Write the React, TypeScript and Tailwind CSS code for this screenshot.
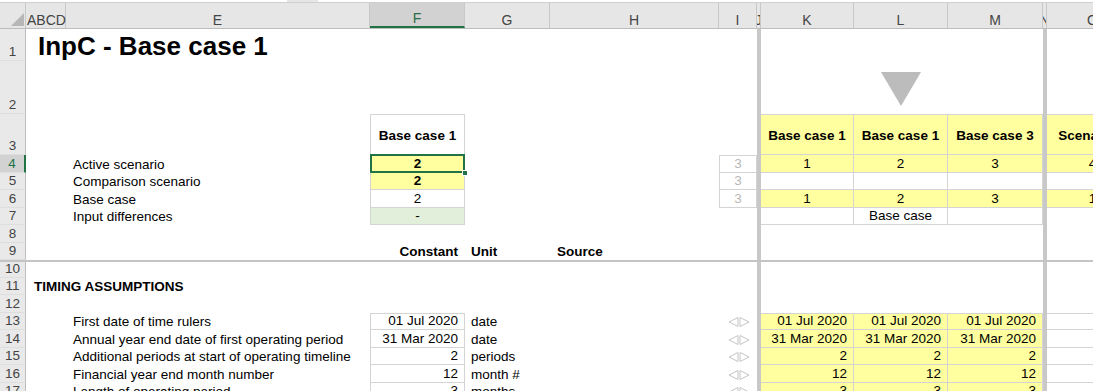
import React from "react";

type Spec = { t?: React.ReactNode; c?: string };

const W = [
  "w-[26px]",
  "w-[40px]",
  "w-[304px]",
  "w-[95px]",
  "w-[85px]",
  "w-[169px]",
  "w-[38px]",
  "w-[4px]",
  "w-[93px]",
  "w-[94px]",
  "w-[95px]",
  "w-[4px]",
  "w-[92px]",
];

const YB = "bg-[#ffff9f] border-r border-b border-[#d4d4d4]";
const YBT = "bg-[#ffff9f] border-t border-r border-b border-[#d4d4d4]";
const WB = "border-r border-b border-[#d4d4d4]";
const FB = "border-l border-r border-b border-[#d4d4d4]";
const FBT = "border border-[#d4d4d4]";

function Arrows() {
  return (
    <svg width="22" height="10" viewBox="0 0 22 10" className="mb-[3px]">
      <polygon points="10,0.5 10,9.5 1,5" fill="none" stroke="#c4c4c4" strokeWidth="1" />
      <polygon points="12,0.5 12,9.5 21,5" fill="none" stroke="#c4c4c4" strokeWidth="1" />
    </svg>
  );
}

function Row({
  n,
  h,
  cells = {},
  hl = false,
  line = false,
  al = "items-end leading-[16px]",
}: {
  n: number;
  h: string;
  cells?: Record<number, Spec>;
  hl?: boolean;
  line?: boolean;
  al?: string;
}) {
  return (
    <div className={`flex shrink-0 ${h} ${line ? "border-t-2 border-[#c4c4c4]" : ""}`}>
      <div
        className={`w-[26px] shrink-0 flex items-end justify-center leading-[16px] text-[13.5px] border-b border-b-[#dedede] ${
          hl
            ? "bg-[#d2d2d2] text-[#217346] border-r-2 border-r-[#217346]"
            : "bg-[#e9e9e9] text-[#444444] border-r border-r-[#bdbdbd]"
        }`}
      >
        {n}
      </div>
      {W.slice(1).map((w, i) => {
        const idx = i + 1;
        if (idx === 7 || idx === 11)
          return <div key={idx} className={`${w} shrink-0 bg-[#c8c8c8]`} />;
        const s = cells[idx];
        return (
          <div key={idx} className={`${w} shrink-0 flex whitespace-nowrap ${al} ${s?.c ?? ""}`}>
            {s?.t}
          </div>
        );
      })}
    </div>
  );
}

function HeaderRow() {
  const labels = ["", "ABCD", "E", "F", "G", "H", "I", "J", "K", "L", "M", "N", "O"];
  return (
    <div className="flex h-[27px] shrink-0 border-t border-t-[#cfcfcf] border-b border-b-[#bdbdbd] bg-[#e6e6e6] text-[14px] leading-[16px] text-[#444444]">
      {labels.map((l, i) => {
        if (i === 0)
          return (
            <div key={i} className="w-[26px] shrink-0 border-r border-[#c8c8c8] flex">
              <svg width="25" height="25" viewBox="0 0 25 25">
                <polygon points="24,10 24,23 11,23" fill="#b7b7b7" />
              </svg>
            </div>
          );
        if (i === 1)
          return (
            <div key={i} className="w-[40px] shrink-0 border-r border-[#c8c8c8] flex items-end pl-[1px]">
              {l}
            </div>
          );
        if (i === 3)
          return (
            <div
              key={i}
              className="w-[95px] shrink-0 border-r border-[#c8c8c8] border-b-2 border-b-[#217346] bg-[#d2d2d2] text-[#2f6b47] flex items-end justify-center"
            >
              {l}
            </div>
          );
        return (
          <div
            key={i}
            className={`${W[i]} shrink-0 border-r border-[#c8c8c8] flex items-end justify-center overflow-hidden`}
          >
            {l}
          </div>
        );
      })}
    </div>
  );
}

export default function App() {
  return (
    <div className="w-[1093px] h-[391px] overflow-hidden bg-white font-['Liberation_Sans',Arial,sans-serif] text-[13.5px] text-black flex flex-col">
      <div className="flex h-[2px] shrink-0">
        <div className="w-[287px] bg-white" />
        <div className="w-[31px] bg-[#e6e6e6]" />
        <div className="flex-1 bg-white" />
      </div>
      <HeaderRow />
      <Row
        n={1}
        h="h-[32px]"
        al=""
        cells={{ 1: { t: "InpC - Base case 1", c: "items-end pl-[12px] text-[26px] font-bold leading-[30px]" } }}
      />
      <Row
        n={2}
        h="h-[53px]"
        al=""
        cells={{
          9: {
            t: (
              <svg width="40" height="34" viewBox="0 0 40 34">
                <polygon points="0,0 40,0 20,34" fill="#bcbcbc" />
              </svg>
            ),
            c: "justify-center items-start pt-[11px]",
          },
        }}
      />
      <Row
        n={3}
        h="h-[41px]"
        al="items-center pt-[3px]"
        cells={{
          3: { t: "Base case 1", c: `justify-center font-bold ${FBT}` },
          8: { t: "Base case 1", c: `justify-center font-bold ${YBT}` },
          9: { t: "Base case 1", c: `justify-center font-bold ${YBT}` },
          10: { t: "Base case 3", c: `justify-center font-bold ${YBT}` },
          12: { t: "Scenario 4", c: `justify-center font-bold ${YBT}` },
        }}
      />
      <Row
        n={4}
        h="h-[18px]"
        hl
        cells={{
          2: { t: "Active scenario", c: "pl-[7px]" },
          3: {
            t: (
              <>
                <span>2</span>
                <div className="absolute -left-px -top-px -right-px -bottom-px border-2 border-[#217346] z-10 pointer-events-none" />
                <div className="absolute -right-[4px] -bottom-[4px] w-[6px] h-[6px] bg-[#217346] border border-white z-20" />
              </>
            ),
            c: `relative justify-center font-bold bg-[#ffff9f] ${FB}`,
          },
          6: { t: "3", c: `justify-center text-[#b8b8b8] ${FBT}` },
          8: { t: "1", c: `justify-center ${YB}` },
          9: { t: "2", c: `justify-center ${YB}` },
          10: { t: "3", c: `justify-center ${YB}` },
          12: { t: "4", c: `justify-center ${YB}` },
        }}
      />
      <Row
        n={5}
        h="h-[17px]"
        cells={{
          2: { t: "Comparison scenario", c: "pl-[7px]" },
          3: { t: "2", c: `justify-center font-bold bg-[#ffff9f] ${FB}` },
          6: { t: "3", c: `justify-center text-[#b8b8b8] ${FB}` },
          8: { c: WB },
          9: { c: WB },
          10: { c: WB },
          12: { c: WB },
        }}
      />
      <Row
        n={6}
        h="h-[18px]"
        cells={{
          2: { t: "Base case", c: "pl-[7px]" },
          3: { t: "2", c: `justify-center ${FB}` },
          6: { t: "3", c: `justify-center text-[#b8b8b8] ${FB}` },
          8: { t: "1", c: `justify-center ${YB}` },
          9: { t: "2", c: `justify-center ${YB}` },
          10: { t: "3", c: `justify-center ${YB}` },
          12: { t: "1", c: `justify-center ${YB}` },
        }}
      />
      <Row
        n={7}
        h="h-[17px]"
        cells={{
          2: { t: "Input differences", c: "pl-[7px]" },
          3: { t: "-", c: `justify-center bg-[#e2efda] ${FB}` },
          8: { c: WB },
          9: { t: "Base case", c: `justify-center ${WB}` },
          10: { c: WB },
        }}
      />
      <Row n={8} h="h-[18px]" />
      <Row
        n={9}
        h="h-[17px]"
        cells={{
          3: { t: "Constant", c: "justify-end pr-[7px] font-bold" },
          4: { t: "Unit", c: "pl-[6px] font-bold" },
          5: { t: "Source", c: "pl-[7px] font-bold" },
        }}
      />
      <Row n={10} h="h-[18px]" line />
      <Row n={11} h="h-[17px]" cells={{ 1: { t: "TIMING ASSUMPTIONS", c: "pl-[8px] font-bold" } }} />
      <Row n={12} h="h-[18px]" />
      {[
        { n: 13, h: "h-[17px]", l: "First date of time rulers", v: "01 Jul 2020", u: "date", top: true },
        { n: 14, h: "h-[18px]", l: "Annual year end date of first operating period", v: "31 Mar 2020", u: "date" },
        { n: 15, h: "h-[17px]", l: "Additional periods at start of operating timeline", v: "2", u: "periods" },
        { n: 16, h: "h-[18px]", l: "Financial year end month number", v: "12", u: "month #" },
        { n: 17, h: "h-[17px]", l: "Length of operating period", v: "3", u: "months" },
      ].map((r) => (
        <Row
          key={r.n}
          n={r.n}
          h={r.h}
          cells={{
            2: { t: r.l, c: "pl-[7px]" },
            3: { t: r.v, c: `justify-end pr-[6px] ${r.top ? FBT : FB}` },
            4: { t: r.u, c: "pl-[6px]" },
            6: { t: <Arrows />, c: "pl-[9px]" },
            8: { t: r.v, c: `justify-end pr-[6px] ${r.top ? YBT : YB}` },
            9: { t: r.v, c: `justify-end pr-[6px] ${r.top ? YBT : YB}` },
            10: { t: r.v, c: `justify-end pr-[6px] ${r.top ? YBT : YB}` },
            12: { c: r.top ? "border-t border-b border-[#d4d4d4]" : "border-b border-[#d4d4d4]" },
          }}
        />
      ))}
    </div>
  );
}
